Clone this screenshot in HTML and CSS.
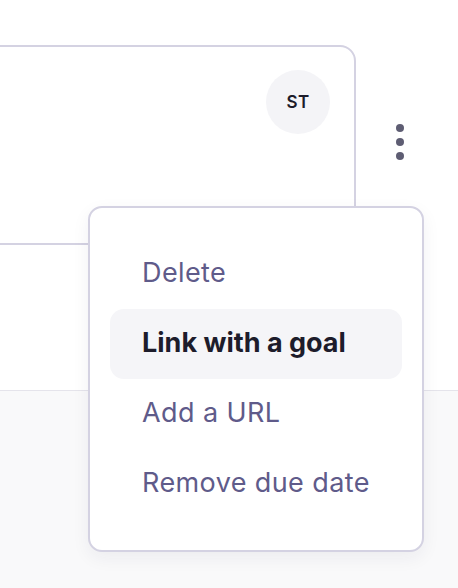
FILE: index.html
```html
<!DOCTYPE html>
<html>
<head>
<meta charset="utf-8">
<link rel="stylesheet" href="styles.css">
</head>
<body>
<div class="page">
  <div class="upper">
    <div class="row">
      <div class="card">
        <div class="avatar">ST</div>
      </div>
      <div class="dots"><span></span><span></span><span></span></div>
    </div>
  </div>
  <div class="lower"></div>
  <div class="menu">
    <div class="item">Delete</div>
    <div class="item active">Link with a goal</div>
    <div class="item">Add a URL</div>
    <div class="item">Remove due date</div>
  </div>
</div>
</body>
</html>
```

FILE: styles.css
```css
html, body {
  margin: 0;
  padding: 0;
  background: #ffffff;
}
body {
  font-family: Inter, "Noto Sans", sans-serif;
}
.page {
  position: relative;
  width: 458px;
  height: 588px;
  overflow: hidden;
}
.upper {
  height: 390px;
  border-bottom: 1px solid #e5e4eb;
  background: #ffffff;
}
.lower {
  height: 197px;
  background: #f9f9fa;
}
.row {
  display: flex;
  align-items: flex-start;
  padding-top: 45px;
}
.card {
  margin-left: -40px;
  width: 396px;
  height: 200px;
  border: 2px solid #d4d2e2;
  border-radius: 16px;
  display: flex;
  justify-content: flex-end;
  align-items: flex-start;
  padding: 23px 24px 0 0;
  box-sizing: border-box;
}
.avatar {
  width: 64px;
  height: 64px;
  border-radius: 50%;
  background: #f4f4f7;
  color: #1d1c2b;
  font-size: 17px;
  font-weight: 600;
  display: flex;
  align-items: center;
  justify-content: center;
  letter-spacing: 0.3px;
}
.dots {
  display: flex;
  flex-direction: column;
  gap: 6px;
  margin-left: 40px;
  margin-top: 79px;
}
.dots span {
  width: 8px;
  height: 8px;
  border-radius: 50%;
  background: #5e5d73;
}
.menu {
  position: absolute;
  left: 88px;
  top: 206px;
  width: 336px;
  height: 346px;
  box-sizing: border-box;
  border: 2px solid #d4d2e2;
  border-radius: 14px;
  background: #ffffff;
  box-shadow: 0 6px 18px rgba(30, 28, 60, 0.06);
  padding: 31px 20px 31px 20px;
  display: flex;
  flex-direction: column;
}
.item {
  height: 70px;
  box-sizing: border-box;
  display: flex;
  align-items: center;
  padding: 0 0 4px 32px;
  font-size: 27px;
  letter-spacing: 0.4px;
  color: #5f5b8a;
  border-radius: 14px;
}
.item.active {
  background: #f5f5f8;
  color: #1d1c2b;
  font-weight: 700;
  letter-spacing: 0;
}
```
